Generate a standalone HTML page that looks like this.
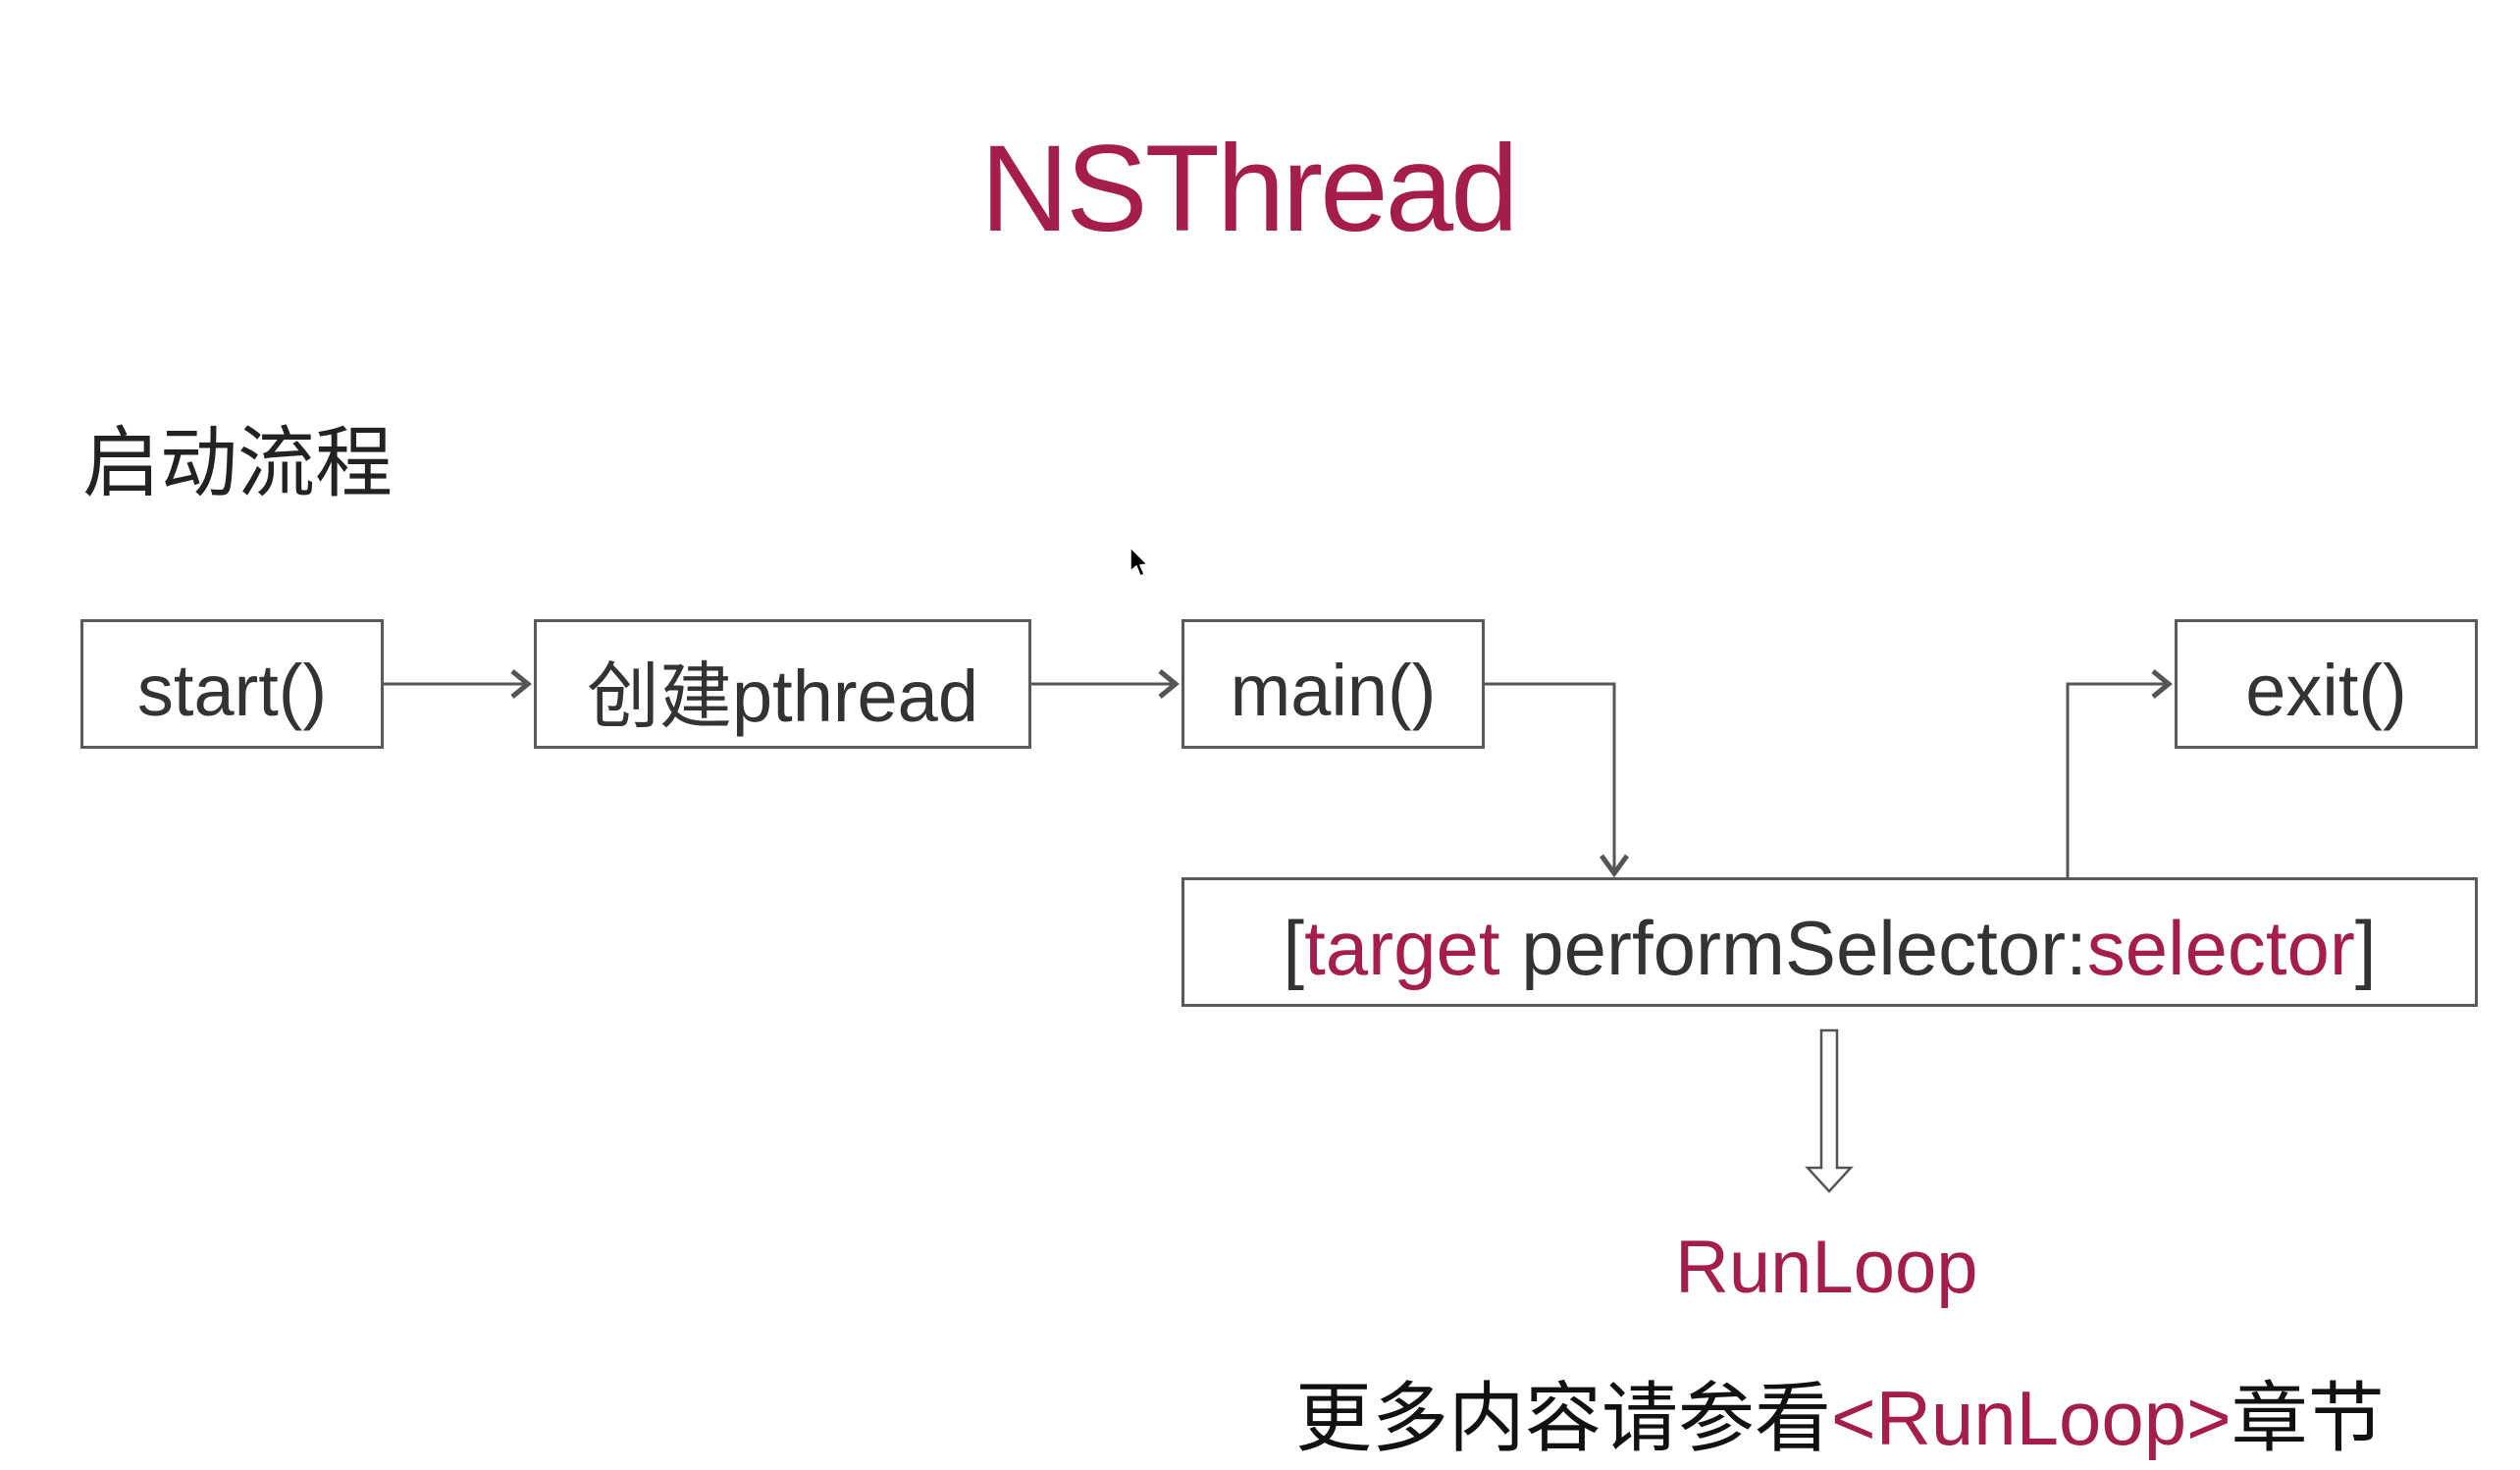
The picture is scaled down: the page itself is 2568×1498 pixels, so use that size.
<!DOCTYPE html>
<html><head><meta charset="utf-8"><style>
html,body{margin:0;padding:0;background:#fff;width:2568px;height:1498px;overflow:hidden;position:relative;font-family:"Liberation Sans","Noto Sans CJK SC",sans-serif;}
.t{position:absolute;white-space:nowrap;line-height:1;}
.box{position:absolute;border:3px solid #5a5a5a;box-sizing:border-box;display:flex;align-items:center;justify-content:center;font-size:74px;color:#333;padding-top:12px;}
.r{color:#a51e4a;}
</style></head><body>
<div class="t r" style="left:999px;top:130px;font-size:125px;letter-spacing:-3px;">NSThread</div>
<div class="t" style="left:84px;top:432px;font-size:79px;color:#222;">启动流程</div>

<div class="box" style="left:82px;top:631px;width:309px;height:132px;">start()</div>
<div class="box" style="left:544px;top:631px;width:507px;height:132px;">创建pthread</div>
<div class="box" style="left:1204px;top:631px;width:309px;height:132px;">main()</div>
<div class="box" style="left:2216px;top:631px;width:309px;height:132px;">exit()</div>
<div class="box" style="left:1204px;top:894px;width:1321px;height:132px;font-size:78px;"><span>[<span class="r">target</span> performSelector:<span class="r">selector</span>]</span></div>

<svg width="2568" height="1498" style="position:absolute;left:0;top:0" fill="none" stroke="#555" stroke-width="3">
<line x1="391" y1="697" x2="538" y2="697"/><polyline points="522,684 538,697 522,710" stroke-width="5"/>
<line x1="1051" y1="697" x2="1198" y2="697"/><polyline points="1182,684 1198,697 1182,710" stroke-width="5"/>
<polyline points="1513,697 1645,697 1645,890"/><polyline points="1632,872 1645,890 1658,872" stroke-width="5"/>
<polyline points="2107,894 2107,697 2210,697"/><polyline points="2194,684 2210,697 2194,710" stroke-width="5"/>
<path d="M1856 1050 H1872 V1190 H1886 L1864 1214 L1842 1190 H1856 Z" stroke-width="2.5"/>
<path d="M1152 558 L1152 582 L1158 577 L1162 587 L1166 585 L1162 576 L1169 575 Z" fill="#000" stroke="#fff" stroke-width="1.5"/>
</svg>

<div class="t r" style="left:1707px;top:1254px;font-size:76px;">RunLoop</div>
<div class="t" style="left:1320px;top:1406px;font-size:78px;color:#111;">更多内容请参看<span class="r">&lt;RunLoop&gt;</span>章节</div>
</body></html>
